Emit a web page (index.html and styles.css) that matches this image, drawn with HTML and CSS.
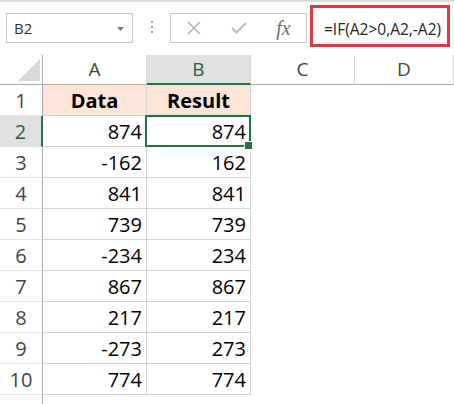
FILE: index.html
```html
<!DOCTYPE html>
<html>
<head>
<meta charset="utf-8">
<link rel="stylesheet" href="styles.css">
</head>
<body>
<div class="toolbar">
  <div class="namebox">
    <span class="name">B2</span>
    <svg class="drop" width="7" height="4" viewBox="0 0 7 4"><polygon points="0,0 7,0 3.5,4" fill="#7a7a7a"/></svg>
  </div>
  <div class="grip"><i></i><i></i><i></i></div>
  <div class="fbuttons">
    <span class="slot"><svg width="14" height="14" viewBox="0 0 14 14"><path d="M1 1L13 13M13 1L1 13" stroke="#b3b3b3" stroke-width="1.6" fill="none"/></svg></span>
    <span class="slot"><svg width="16" height="12" viewBox="0 0 16 12"><polyline points="1,6 5.5,10.5 15,1" stroke="#bcbcbc" stroke-width="2" fill="none"/></svg></span>
    <span class="slot fx">fx</span>
  </div>
  <div class="formula">=IF(A2&gt;0,A2,-A2)</div>
</div>
<div class="sheet">
  <div class="corner"><svg width="22" height="22" viewBox="0 0 22 22"><polygon points="22,0 22,22 0,22" fill="#d9d9d9"/></svg></div>
  <div class="colhead">A</div>
  <div class="colhead sel">B</div>
  <div class="colhead">C</div>
  <div class="colhead">D</div>

  <div class="rowhead">1</div><div class="cell hdr">Data</div><div class="cell hdr">Result</div><div class="empty"></div><div class="empty"></div>
  <div class="rowhead sel">2</div><div class="cell">874</div><div class="cell active">874</div><div class="empty"></div><div class="empty"></div>
  <div class="rowhead">3</div><div class="cell">-162</div><div class="cell">162</div><div class="empty"></div><div class="empty"></div>
  <div class="rowhead">4</div><div class="cell">841</div><div class="cell">841</div><div class="empty"></div><div class="empty"></div>
  <div class="rowhead">5</div><div class="cell">739</div><div class="cell">739</div><div class="empty"></div><div class="empty"></div>
  <div class="rowhead">6</div><div class="cell">-234</div><div class="cell">234</div><div class="empty"></div><div class="empty"></div>
  <div class="rowhead">7</div><div class="cell">867</div><div class="cell">867</div><div class="empty"></div><div class="empty"></div>
  <div class="rowhead">8</div><div class="cell">217</div><div class="cell">217</div><div class="empty"></div><div class="empty"></div>
  <div class="rowhead">9</div><div class="cell">-273</div><div class="cell">273</div><div class="empty"></div><div class="empty"></div>
  <div class="rowhead">10</div><div class="cell">774</div><div class="cell">774</div><div class="empty"></div><div class="empty"></div>
  <div class="rowhead">11</div><div class="empty"></div><div class="empty"></div><div class="empty"></div><div class="empty"></div>
</div>
</body>
</html>
```

FILE: styles.css
```css
* { box-sizing: border-box; }
html, body { margin: 0; padding: 0; background: #fff; }
body {
  width: 454px;
  height: 404px;
  overflow: hidden;
  font-family: "Open Sans", "Noto Sans", sans-serif;
  color: #000;
}

/* ---------- formula bar ---------- */
.toolbar {
  height: 55px;
  border-top: 2px solid #dcdcdc;
  display: flex;
  align-items: flex-start;
}
.namebox {
  margin: 11px 0 0 6px;
  width: 127px;
  height: 30px;
  border: 1px solid #c6c6c6;
  display: flex;
  align-items: center;
  justify-content: space-between;
  padding: 0 8px 0 7px;
}
.name {
  font-size: 15px;
  color: #333;
  line-height: 28px;
}
.drop { display: block; margin-top: 1px; }
.grip {
  margin: 19px 0 0 18px;
  display: flex;
  flex-direction: column;
  gap: 3px;
}
.grip i {
  display: block;
  width: 2px;
  height: 2px;
  background: #a0a0a0;
}
.fbuttons {
  margin: 11px 0 0 17px;
  width: 137px;
  height: 30px;
  border: 1px solid #c6c6c6;
  display: flex;
}
.slot {
  width: 45px;
  display: flex;
  align-items: center;
  justify-content: center;
}
.slot svg { display: block; }
.fx {
  font-family: "Liberation Serif", "DejaVu Serif", serif;
  font-style: italic;
  font-size: 20px;
  color: #6e6e6e;
  line-height: 28px;
}
.formula {
  margin: 3px 0 0 3px;
  width: 140px;
  height: 42px;
  border: 3px solid #dc3a3d;
  padding: 6px 0 0 11px;
  font-size: 15.5px;
  line-height: 30px;
  color: #222;
  white-space: nowrap;
}

/* ---------- sheet grid ---------- */
.sheet {
  display: grid;
  grid-template-columns: 43px 104px 104px 104px 1fr;
  grid-template-rows: 30px;
  grid-auto-rows: 31px;
}
.corner {
  border-right: 1px solid #a8a8a8;
  border-bottom: 1px solid #ababab;
  display: flex;
  align-items: flex-end;
  justify-content: flex-end;
  padding: 0 2px 3px 0;
}
.corner svg { display: block; }
.colhead {
  border-bottom: 1px solid #ababab;
  border-right: 1px solid #d6d6d6;
  text-align: center;
  font-size: 19px;
  line-height: 27px;
  padding-top: 1px;
  color: #444;
}
.colhead.sel {
  background: #e1e1e1;
  border-bottom: 2px solid #217346;
  color: #2b5e41;
}
.rowhead {
  border-right: 1px solid #a8a8a8;
  border-bottom: 1px solid #e4e4e4;
  text-align: center;
  font-size: 20px;
  line-height: 29px;
  padding-top: 1px;
  color: #444;
}
.rowhead.sel {
  background: #e1e1e1;
  border-right: 2px solid #217346;
  color: #2b5e41;
}
.cell {
  border-right: 1px solid #d4d4d4;
  border-bottom: 1px solid #d4d4d4;
  font-size: 20px;
  line-height: 29px;
  padding: 1px 4px 0 4px;
  text-align: right;
  white-space: nowrap;
}
.cell.hdr {
  background: #fce4d6;
  font-weight: 700;
  text-align: center;
}
.cell.active { position: relative; }
.cell.active::before {
  content: "";
  position: absolute;
  top: -1px;
  left: -2px;
  right: -1px;
  bottom: -1px;
  border: 2px solid #217346;
}
.cell.active::after {
  content: "";
  position: absolute;
  width: 7px;
  height: 7px;
  right: -3px;
  bottom: -4px;
  background: #217346;
  border: 1px solid #fff;
}
.empty { background: #fff; }
```
